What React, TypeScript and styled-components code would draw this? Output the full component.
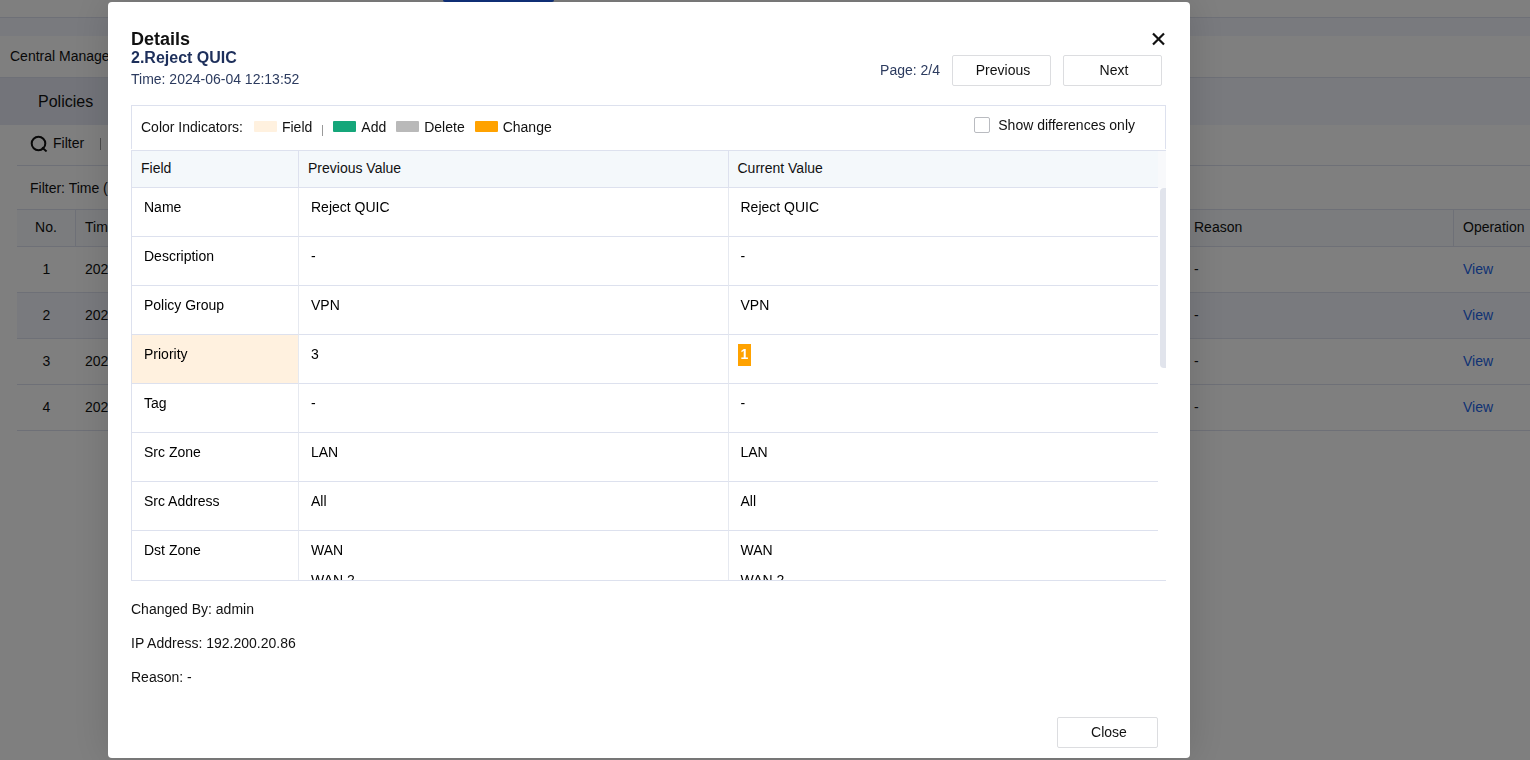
import React, { useState } from "react";
import styled, { createGlobalStyle } from "styled-components";

const line = "#dde1ee";
const cellLine = "#e6e9f0";
const headFill = "#f4f8fb";
const orange = "#ffa200";

const GlobalStyle = createGlobalStyle`
  * { box-sizing: border-box; }
  body {
    margin: 0;
    overflow: hidden;
    background: #fff;
    color: #111;
    font: 14px/20px "Liberation Sans", Arial, sans-serif;
  }
  button, input { font: inherit; color: inherit; }
  h2, h3, p, ul { margin: 0; padding: 0; font-weight: normal; }
`;

/* Page behind the dialog */

const Page = styled.div`
  min-height: 100vh;
`;

const TopBar = styled.header`
  display: flex;
  height: 18px;
  padding-left: 443px;
  border-bottom: 1px solid ${line};
`;

const TopTab = styled.div`
  width: 111px;
  height: 2px;
  border-radius: 0 0 2px 2px;
  background: #2264fa;
`;

const Crumbs = styled.div`
  border-top: 18px solid #f3f5fd;
  border-bottom: 1px solid ${line};
  padding: 10px;
  height: 60px;
`;

const TabBar = styled.nav`
  display: flex;
  height: 47px;
  background: #f3f4fd;
`;

const Tab = styled.button`
  border: 0;
  padding: 0 38px;
  background: #e6e9f4;
  font-size: 16px;
`;

const Main = styled.main`
  padding-left: 17px;
`;

const Tools = styled.div`
  display: flex;
  align-items: center;
  height: 41px;
  padding: 0 0 4px 13px;
  border-bottom: 1px solid ${line};
`;

const ToolButton = styled.button`
  display: flex;
  align-items: center;
  gap: 5px;
  border: 0;
  padding: 0 16px 0 0;
  background: none;
`;

const ToolDivider = styled.span`
  width: 1px;
  height: 12px;
  margin-top: 2px;
  background: #999;
`;

const FilterSummary = styled.p`
  padding: 12px 13px 11px;
`;

const LogTable = styled.table`
  width: 100%;
  table-layout: fixed;
  border-collapse: separate;
  border-spacing: 0;

  th, td {
    padding: 0 9px 2px;
    text-align: left;
    font-weight: normal;
    white-space: nowrap;
    border-bottom: 1px solid ${line};
  }
  th {
    height: 38px;
    border-top: 1px solid ${line};
    background: #f6f9fc;
  }
  td { height: 46px; }
  th:not(:last-child) { border-right: 1px solid ${line}; }
  th:first-child, td:first-child { text-align: center; }
`;

const LogRow = styled.tr<{ $active?: boolean }>`
  background: ${(p) => (p.$active ? "#f3f5fd" : "transparent")};
`;

const ViewLink = styled.a`
  color: #2264e8;
  text-decoration: none;
`;

/* Dialog */

const Overlay = styled.div`
  position: fixed;
  inset: 0;
  display: flex;
  padding: 2px 340px 2px 108px;
  background: rgba(0, 0, 0, 0.5);
`;

const Dialog = styled.section`
  display: flex;
  flex: 1;
  flex-direction: column;
  min-width: 0;
  padding: 27px 24px 10px 23px;
  border-radius: 4px;
  background: #fff;
  box-shadow: 0 0 40px rgba(0, 0, 0, 0.15);
`;

const TitleRow = styled.div`
  display: flex;
  justify-content: space-between;
  align-items: center;
`;

const Title = styled.h2`
  font-size: 18px;
  line-height: 20px;
  font-weight: bold;
`;

const IconButton = styled.button`
  display: flex;
  border: 0;
  padding: 0;
  background: none;
`;

const SubHeader = styled.div`
  display: flex;
  justify-content: space-between;
  height: 56px;
  color: #2c3b5f;
`;

const RecordName = styled.h3`
  font-size: 16px;
  line-height: 18px;
  font-weight: bold;
  color: #1d2f5b;
`;

const RecordTime = styled.p`
  padding-top: 2px;
`;

const Pager = styled.div`
  display: flex;
  align-items: center;
  height: 31px;
  margin: 6px 4px 0 0;
  gap: 12px;
`;

const PageCount = styled.span`
  padding-bottom: 2px;
`;

const Button = styled.button<{ $width: number }>`
  width: ${(p) => p.$width}px;
  height: 31px;
  border: 1px solid #dcdde0;
  border-radius: 2px;
  padding: 0 0 2px 3px;
  background: #fff;
  color: #111;
`;

const Legend = styled.div`
  display: flex;
  align-items: center;
  height: 44px;
  margin-bottom: 1px;
  padding: 0 30px 2px 9px;
  border: 1px solid ${line};
  border-bottom: 0;
`;

const LegendTitle = styled.span`
  margin-right: 11px;
`;

const LegendItem = styled.span<{ $color: string }>`
  display: flex;
  align-items: center;
  gap: 5px;
  margin-right: 10px;

  &::before {
    content: "";
    width: 23px;
    height: 11px;
    border-radius: 1px;
    background: ${(p) => p.$color};
  }
`;

const LegendDivider = styled.span`
  width: 1px;
  height: 11px;
  margin: 8px 10px 0 0;
  background: #999;
`;

const CheckLabel = styled.label`
  display: flex;
  align-items: center;
  gap: 8px;
  margin: 0 0 4px auto;
`;

const Checkbox = styled.input`
  appearance: none;
  width: 16px;
  height: 16px;
  margin: 0;
  border: 1px solid #b9bbc0;
  border-radius: 2px;
  background: #fff;
  &:checked { background: #2264fa; }
`;

const TableFrame = styled.div`
  display: flex;
  flex: 1;
  min-height: 0;
  border: solid ${line};
  border-width: 1px 0 1px 1px;
`;

const Viewport = styled.div`
  flex: 1;
  overflow-y: auto;
  scrollbar-width: none;
`;

const Gutter = styled.div`
  width: 8px;
  padding-left: 2px;

  &::before {
    content: "";
    display: block;
    height: 37px;
    margin-left: -2px;
    background: #f8f9fb;
  }
`;

const Thumb = styled.div`
  height: 180px;
  border-radius: 4px 0 0 4px;
  background: #e1e4ec;
`;

const DiffTable = styled.table`
  width: 100%;
  table-layout: fixed;
  border-collapse: separate;
  border-spacing: 0;

  th, td {
    text-align: left;
    vertical-align: top;
    font-weight: normal;
    border-bottom: 1px solid ${line};
  }
  th:not(:last-child) { border-right: 1px solid ${line}; }
  td:not(:last-child) { border-right: 1px solid ${cellLine}; }
  th {
    position: sticky;
    top: 0;
    height: 37px;
    padding: 7px 9px;
    background: ${headFill};
  }
  td { padding: 9px; color: #000; }
`;

const FieldCell = styled.td<{ $changed: boolean }>`
  background: ${(p) => (p.$changed ? "#fff1df" : "transparent")};
`;

const ValueLine = styled.div`
  display: flex;
  margin-bottom: 8px;
`;

const Value = styled.span<{ $changed?: boolean }>`
  padding: 0 3px 2px;
  background: ${(p) => (p.$changed ? orange : "transparent")};
  color: ${(p) => (p.$changed ? "#fff" : "inherit")};
  font-weight: ${(p) => (p.$changed ? "bold" : "normal")};
`;

const Meta = styled.div`
  display: flex;
  flex-direction: column;
  gap: 14px;
  padding: 18px 0 30px;
`;

const Footer = styled.footer`
  display: flex;
  justify-content: flex-end;
  padding-right: 8px;
`;

type Row = { field: string; before: string[]; after: string[] };

const rows: Row[] = [
  { field: "Name", before: ["Reject QUIC"], after: ["Reject QUIC"] },
  { field: "Description", before: ["-"], after: ["-"] },
  { field: "Policy Group", before: ["VPN"], after: ["VPN"] },
  { field: "Priority", before: ["3"], after: ["1"] },
  { field: "Tag", before: ["-"], after: ["-"] },
  { field: "Src Zone", before: ["LAN"], after: ["LAN"] },
  { field: "Src Address", before: ["All"], after: ["All"] },
  { field: "Dst Zone", before: ["WAN", "WAN 2"], after: ["WAN", "WAN 2"] },
];

const isChanged = (r: Row) => r.before.join() !== r.after.join();

const SearchIcon = () => (
  <svg width="18" height="18" viewBox="0 0 18 18" fill="none" stroke="#111" strokeWidth="2">
    <circle cx="8.5" cy="9.5" r="6.8" />
    <path d="M12 13.5 16.6 17.4" />
  </svg>
);

const CloseIcon = () => (
  <svg width="15" height="14" viewBox="0 0 15 14" fill="none" stroke="#111" strokeWidth="2.2">
    <path d="M2 1.5 13 12.5M13 1.5 2 12.5" />
  </svg>
);

function LogPage() {
  return (
    <Page>
      <TopBar>
        <TopTab />
      </TopBar>
      <Crumbs>Central Management</Crumbs>
      <TabBar>
        <Tab>Policies</Tab>
      </TabBar>
      <Main>
        <Tools>
          <ToolButton>
            <SearchIcon />
            Filter
          </ToolButton>
          <ToolDivider />
        </Tools>
        <FilterSummary>Filter: Time (2024-06-04)</FilterSummary>
        <LogTable>
          <colgroup>
            <col style={{ width: 59 }} />
            <col />
            <col style={{ width: 269 }} />
            <col style={{ width: 76 }} />
          </colgroup>
          <thead>
            <tr>
              <th>No.</th>
              <th>Time</th>
              <th>Reason</th>
              <th>Operation</th>
            </tr>
          </thead>
          <tbody>
            {[1, 2, 3, 4].map((n) => (
              <LogRow key={n} $active={n === 2}>
                <td>{n}</td>
                <td>2024-06-04</td>
                <td>-</td>
                <td>
                  <ViewLink href="#view">View</ViewLink>
                </td>
              </LogRow>
            ))}
          </tbody>
        </LogTable>
      </Main>
    </Page>
  );
}

export default function App() {
  const [onlyDiff, setOnlyDiff] = useState(false);
  const shown = onlyDiff ? rows.filter(isChanged) : rows;

  return (
    <>
      <GlobalStyle />
      <LogPage />
      <Overlay>
        <Dialog role="dialog" aria-labelledby="dialog-title">
          <TitleRow>
            <Title id="dialog-title">Details</Title>
            <IconButton aria-label="Close dialog">
              <CloseIcon />
            </IconButton>
          </TitleRow>
          <SubHeader>
            <div>
              <RecordName>2.Reject QUIC</RecordName>
              <RecordTime>Time: 2024-06-04 12:13:52</RecordTime>
            </div>
            <Pager>
              <PageCount>Page: 2/4</PageCount>
              <Button $width={99}>Previous</Button>
              <Button $width={99}>Next</Button>
            </Pager>
          </SubHeader>
          <Legend>
            <LegendTitle>Color Indicators:</LegendTitle>
            <LegendItem $color="#fff1df">Field</LegendItem>
            <LegendDivider />
            <LegendItem $color="#15a67a">Add</LegendItem>
            <LegendItem $color="#b9b9b9">Delete</LegendItem>
            <LegendItem $color={orange}>Change</LegendItem>
            <CheckLabel>
              <Checkbox
                type="checkbox"
                checked={onlyDiff}
                onChange={(e) => setOnlyDiff(e.target.checked)}
              />
              Show differences only
            </CheckLabel>
          </Legend>
          <TableFrame>
            <Viewport>
              <DiffTable>
                <colgroup>
                  <col style={{ width: 167 }} />
                  <col />
                  <col />
                </colgroup>
                <thead>
                  <tr>
                    <th>Field</th>
                    <th>Previous Value</th>
                    <th>Current Value</th>
                  </tr>
                </thead>
                <tbody>
                  {shown.map((r) => (
                    <tr key={r.field}>
                      <FieldCell $changed={isChanged(r)}>
                        <ValueLine>
                          <Value>{r.field}</Value>
                        </ValueLine>
                      </FieldCell>
                      <td>
                        {r.before.map((v) => (
                          <ValueLine key={v}>
                            <Value>{v}</Value>
                          </ValueLine>
                        ))}
                      </td>
                      <td>
                        {r.after.map((v) => (
                          <ValueLine key={v}>
                            <Value $changed={isChanged(r)}>{v}</Value>
                          </ValueLine>
                        ))}
                      </td>
                    </tr>
                  ))}
                </tbody>
              </DiffTable>
            </Viewport>
            <Gutter>
              <Thumb />
            </Gutter>
          </TableFrame>
          <Meta>
            <p>Changed By: admin</p>
            <p>IP Address: 192.200.20.86</p>
            <p>Reason: -</p>
          </Meta>
          <Footer>
            <Button $width={101}>Close</Button>
          </Footer>
        </Dialog>
      </Overlay>
    </>
  );
}
